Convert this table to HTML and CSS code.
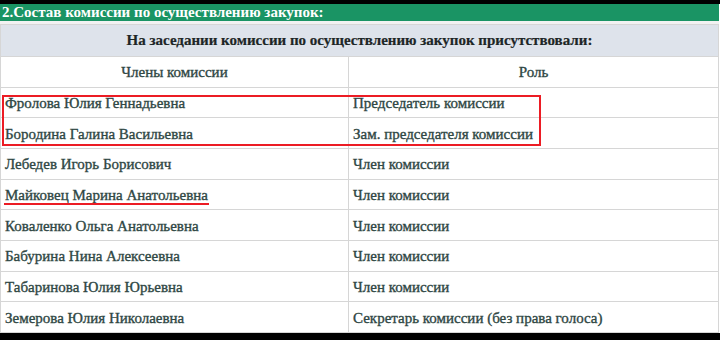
FILE: index.html
```html
<!DOCTYPE html>
<html lang="ru">
<head>
<meta charset="utf-8">
<link rel="stylesheet" href="styles.css">
</head>
<body>
<div class="screen">
  <div class="topbar"></div>
  <div class="sheet">
    <div class="title">2.Состав комиссии по осуществлению закупок:</div>
    <div class="spacer"></div>
    <div class="grid">
      <div class="cell head">На заседании комиссии по осуществлению закупок присутствовали:</div>
      <div class="cell colhead">Члены комиссии</div>
      <div class="cell colhead">Роль</div>
      <div class="cell">Фролова Юлия Геннадьевна</div>
      <div class="cell">Председатель комиссии</div>
      <div class="cell">Бородина Галина Васильевна</div>
      <div class="cell">Зам. председателя комиссии</div>
      <div class="cell">Лебедев Игорь Борисович</div>
      <div class="cell">Член комиссии</div>
      <div class="cell">Майковец Марина Анатольевна</div>
      <div class="cell">Член комиссии</div>
      <div class="cell">Коваленко Ольга Анатольевна</div>
      <div class="cell">Член комиссии</div>
      <div class="cell">Бабурина Нина Алексеевна</div>
      <div class="cell">Член комиссии</div>
      <div class="cell">Табаринова Юлия Юрьевна</div>
      <div class="cell">Член комиссии</div>
      <div class="cell">Земерова Юлия Николаевна</div>
      <div class="cell">Секретарь комиссии (без права голоса)</div>
    </div>
    <div class="mark-box"></div>
    <div class="mark-line"></div>
  </div>
  <div class="bottombar"></div>
</div>
</body>
</html>
```
FILE: styles.css
```css
html, body {
  margin: 0;
  padding: 0;
  background: #000;
}
.screen {
  width: 720px;
  height: 340px;
  display: flex;
  flex-direction: column;
  background: #000;
  overflow: hidden;
}
.topbar {
  height: 4px;
  background: #000;
}
.sheet {
  position: relative;
  background: #fff;
  font-family: "Liberation Serif", "Times New Roman", serif;
  font-size: 15px;
}
.title {
  height: 17px;
  background: #1a9464;
  color: #fff;
  font-weight: bold;
  line-height: 17px;
  padding-left: 2px;
  width: 717px;
}
.spacer {
  height: 3px;
  width: 719px;
  background: #f2f2f2;
}
.grid {
  display: grid;
  width: 719px;
  box-sizing: border-box;
  grid-template-columns: 347px 369px;
  grid-template-rows: 31px repeat(9, 29.67px);
  gap: 1px;
  padding: 1px;
  background: #d6d6d6;
}
.cell {
  background: #fff;
  color: #2f4744;
  -webkit-text-stroke: 0.35px #2f4744;
  display: flex;
  align-items: center;
  padding: 2px 0 0 4px;
  box-sizing: border-box;
  white-space: nowrap;
}
.head {
  grid-column: 1 / 3;
  background: #dee3eb;
  color: #1d2626;
  -webkit-text-stroke: 0.2px #1d2626;
  font-weight: bold;
  justify-content: center;
  padding: 0;
}
.colhead {
  justify-content: center;
  padding: 2px 0 0 0;
}
.mark-box {
  position: absolute;
  left: 2px;
  top: 91px;
  width: 535px;
  height: 47px;
  border: 2px solid #ec1c24;
}
.mark-line {
  position: absolute;
  left: 4px;
  top: 199px;
  width: 205px;
  height: 2px;
  background: #ec1c24;
}
.bottombar {
  flex: 1;
  background: #000;
}
```
